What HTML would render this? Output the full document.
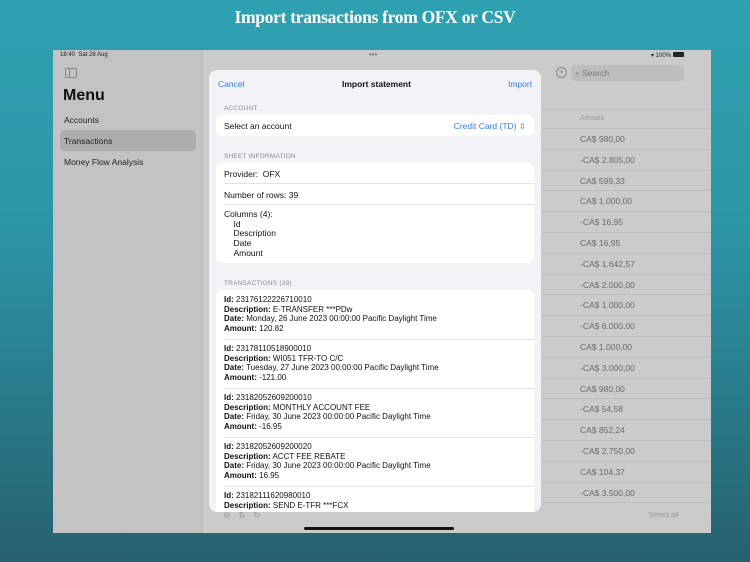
<!DOCTYPE html>
<html><head><meta charset="utf-8"><style>
*{margin:0;padding:0;box-sizing:border-box}
body{width:750px;height:562px;overflow:hidden;font-family:"Liberation Sans",sans-serif;background:linear-gradient(180deg,#2fa1b0 0%,#2c96a6 40%,#286e7c 85%,#266070 100%);position:relative}
.title{position:absolute;top:7px;left:0;width:750px;text-align:center;color:#fff;font-family:"Liberation Serif",serif;font-weight:bold;font-size:17.5px;letter-spacing:-0.3px}
.screen{position:absolute;left:53px;top:50px;width:658px;height:483px;background:#cbcbcb;overflow:hidden}
.side{position:absolute;left:0;top:0;width:150px;height:483px;background:#c3c3c5;border-right:1px solid #b8b8b8}
.t{position:absolute;white-space:nowrap}
.amt{position:absolute;left:527px;font-size:8.5px;color:#6a6a6a}
.hl{position:absolute;left:485px;width:180px;height:1px;background:#bcbcbc}
.modal{position:absolute;left:209px;top:70px;width:332px;height:442px;background:#f2f2f7;border-radius:8px;overflow:hidden}
.card{position:absolute;left:7px;width:318px;background:#fff;border-radius:7px}
.lbl{position:absolute;left:15px;font-size:6.5px;color:#8a8a8e;letter-spacing:.2px}
.row{font-size:8.5px;color:#111;padding-left:8px;position:absolute;left:0;width:100%}
.sep{position:absolute;left:8px;right:0;height:1px;background:#e2e2e6}
.tx{position:absolute;left:8px;font-size:8px;line-height:9.7px;color:#111}
.tx b{font-weight:bold}
.blue{color:#2f7fe0}
</style></head><body>
<div class="title">Import transactions from OFX or CSV</div>
<div class="screen">
 <div class="side">
  <div class="t" style="left:7px;top:2px;font-size:6px;color:#222">18:40&nbsp; Sat 26 Aug</div>
  <div style="position:absolute;left:12px;top:18px;width:12px;height:10px;border:1px solid #888;border-radius:2px"><div style="width:4px;height:8px;border-right:1px solid #888"></div></div>
  <div class="t" style="left:10px;top:37px;font-size:16px;font-weight:bold;color:#111">Menu</div>
  <div class="t" style="left:11px;top:65px;font-size:8.5px;color:#222">Accounts</div>
  <div style="position:absolute;left:7px;top:80px;width:136px;height:21px;background:#adadaf;border-radius:5px"></div>
  <div class="t" style="left:11px;top:86px;font-size:8.5px;color:#222">Transactions</div>
  <div class="t" style="left:11px;top:107px;font-size:8.5px;color:#222">Money Flow Analysis</div>
 </div>
 <div class="t" style="left:316px;top:0px;font-size:8px;color:#777">•••</div>
 <div class="t" style="left:598px;top:2px;font-size:6px;color:#222">▾ 100% <span style="display:inline-block;width:11px;height:5px;background:#222;border-radius:1px"></span></div>
 <div style="position:absolute;left:503px;top:17px;width:11px;height:11px;border:1px solid #888;border-radius:50%;font-size:9px;line-height:9px;text-align:center;color:#888">+</div>
 <div style="position:absolute;left:518px;top:15px;width:113px;height:16px;background:#bdbdbf;border-radius:5px"></div>
 <div class="t" style="left:522px;top:18px;font-size:8.5px;color:#777">⌕ Search</div>
 <div class="hl" style="top:59px"></div>
 <div class="t" style="left:527px;top:65px;font-size:7px;color:#999">Amount</div>
 <div class="hl" style="top:78px"></div>
 <div class="amt" style="top:84px">CA$ 980,00</div><div class="hl" style="top:99px"></div>
 <div class="amt" style="top:105px">-CA$ 2.805,00</div><div class="hl" style="top:120px"></div>
 <div class="amt" style="top:126px">CA$ 599,33</div><div class="hl" style="top:140px"></div>
 <div class="amt" style="top:146px">CA$ 1.000,00</div><div class="hl" style="top:161px"></div>
 <div class="amt" style="top:167px">-CA$ 16,95</div><div class="hl" style="top:182px"></div>
 <div class="amt" style="top:188px">CA$ 16,95</div><div class="hl" style="top:203px"></div>
 <div class="amt" style="top:209px">-CA$ 1.642,57</div><div class="hl" style="top:224px"></div>
 <div class="amt" style="top:230px">-CA$ 2.000,00</div><div class="hl" style="top:244px"></div>
 <div class="amt" style="top:250px">-CA$ 1.000,00</div><div class="hl" style="top:265px"></div>
 <div class="amt" style="top:271px">-CA$ 6.000,00</div><div class="hl" style="top:286px"></div>
 <div class="amt" style="top:292px">CA$ 1.000,00</div><div class="hl" style="top:307px"></div>
 <div class="amt" style="top:313px">-CA$ 3.000,00</div><div class="hl" style="top:328px"></div>
 <div class="amt" style="top:334px">CA$ 980,00</div><div class="hl" style="top:348px"></div>
 <div class="amt" style="top:354px">-CA$ 54,58</div><div class="hl" style="top:369px"></div>
 <div class="amt" style="top:375px">CA$ 852,24</div><div class="hl" style="top:390px"></div>
 <div class="amt" style="top:396px">-CA$ 2.750,00</div><div class="hl" style="top:411px"></div>
 <div class="amt" style="top:417px">CA$ 104,37</div><div class="hl" style="top:432px"></div>
 <div class="amt" style="top:438px">-CA$ 3.500,00</div><div class="hl" style="top:452px"></div>
 <div class="t" style="left:595px;top:460px;font-size:7.5px;color:#999">Select all</div>
 <div class="t" style="left:170px;top:460px;font-size:9px;color:#999">⊜&nbsp;&nbsp;&nbsp;⇅&nbsp;&nbsp;&nbsp;↻</div>
 <div style="position:absolute;left:251px;top:477px;width:150px;height:3px;background:#111;border-radius:2px"></div>
</div>
<div class="modal">
 <div class="t blue" style="left:9px;top:9px;font-size:8.5px">Cancel</div>
 <div class="t" style="left:133px;top:9px;font-size:8.5px;font-weight:bold;color:#111">Import statement</div>
 <div class="t blue" style="left:299px;top:9px;font-size:8.5px">Import</div>
 <div class="lbl" style="top:35px">ACCOUNT</div>
 <div class="card" style="top:45px;height:21px">
  <div class="row" style="top:6px">Select an account</div>
  <div class="t blue" style="right:8px;top:6px;font-size:8.5px">Credit Card (TD) ⇳</div>
 </div>
 <div class="lbl" style="top:83px">SHEET INFORMATION</div>
 <div class="card" style="top:93px;height:100px">
  <div class="row" style="top:6px">Provider:&nbsp; OFX</div>
  <div class="sep" style="top:20px"></div>
  <div class="row" style="top:27px">Number of rows: 39</div>
  <div class="sep" style="top:41px"></div>
  <div class="row" style="top:47px;line-height:9.7px">Columns (4):<br>&nbsp;&nbsp;&nbsp;&nbsp;Id<br>&nbsp;&nbsp;&nbsp;&nbsp;Description<br>&nbsp;&nbsp;&nbsp;&nbsp;Date<br>&nbsp;&nbsp;&nbsp;&nbsp;Amount</div>
 </div>
 <div class="lbl" style="top:210px">TRANSACTIONS (39)</div>
 <div class="card" style="top:220px;height:240px">
  <div class="tx" style="top:5px"><b>Id:</b> 23176122226710010<br><b>Description:</b> E-TRANSFER ***PDw<br><b>Date:</b> Monday, 26 June 2023 00:00:00 Pacific Daylight Time<br><b>Amount:</b> 120.82</div>
  <div class="sep" style="top:49px"></div>
  <div class="tx" style="top:54px"><b>Id:</b> 23178110518900010<br><b>Description:</b> WI051 TFR-TO C/C<br><b>Date:</b> Tuesday, 27 June 2023 00:00:00 Pacific Daylight Time<br><b>Amount:</b> -121.00</div>
  <div class="sep" style="top:98px"></div>
  <div class="tx" style="top:103px"><b>Id:</b> 23182052609200010<br><b>Description:</b> MONTHLY ACCOUNT FEE<br><b>Date:</b> Friday, 30 June 2023 00:00:00 Pacific Daylight Time<br><b>Amount:</b> -16.95</div>
  <div class="sep" style="top:147px"></div>
  <div class="tx" style="top:152px"><b>Id:</b> 23182052609200020<br><b>Description:</b> ACCT FEE REBATE<br><b>Date:</b> Friday, 30 June 2023 00:00:00 Pacific Daylight Time<br><b>Amount:</b> 16.95</div>
  <div class="sep" style="top:196px"></div>
  <div class="tx" style="top:201px"><b>Id:</b> 23182111620980010<br><b>Description:</b> SEND E-TFR ***FCX</div>
 </div>
</div>
</body></html>
